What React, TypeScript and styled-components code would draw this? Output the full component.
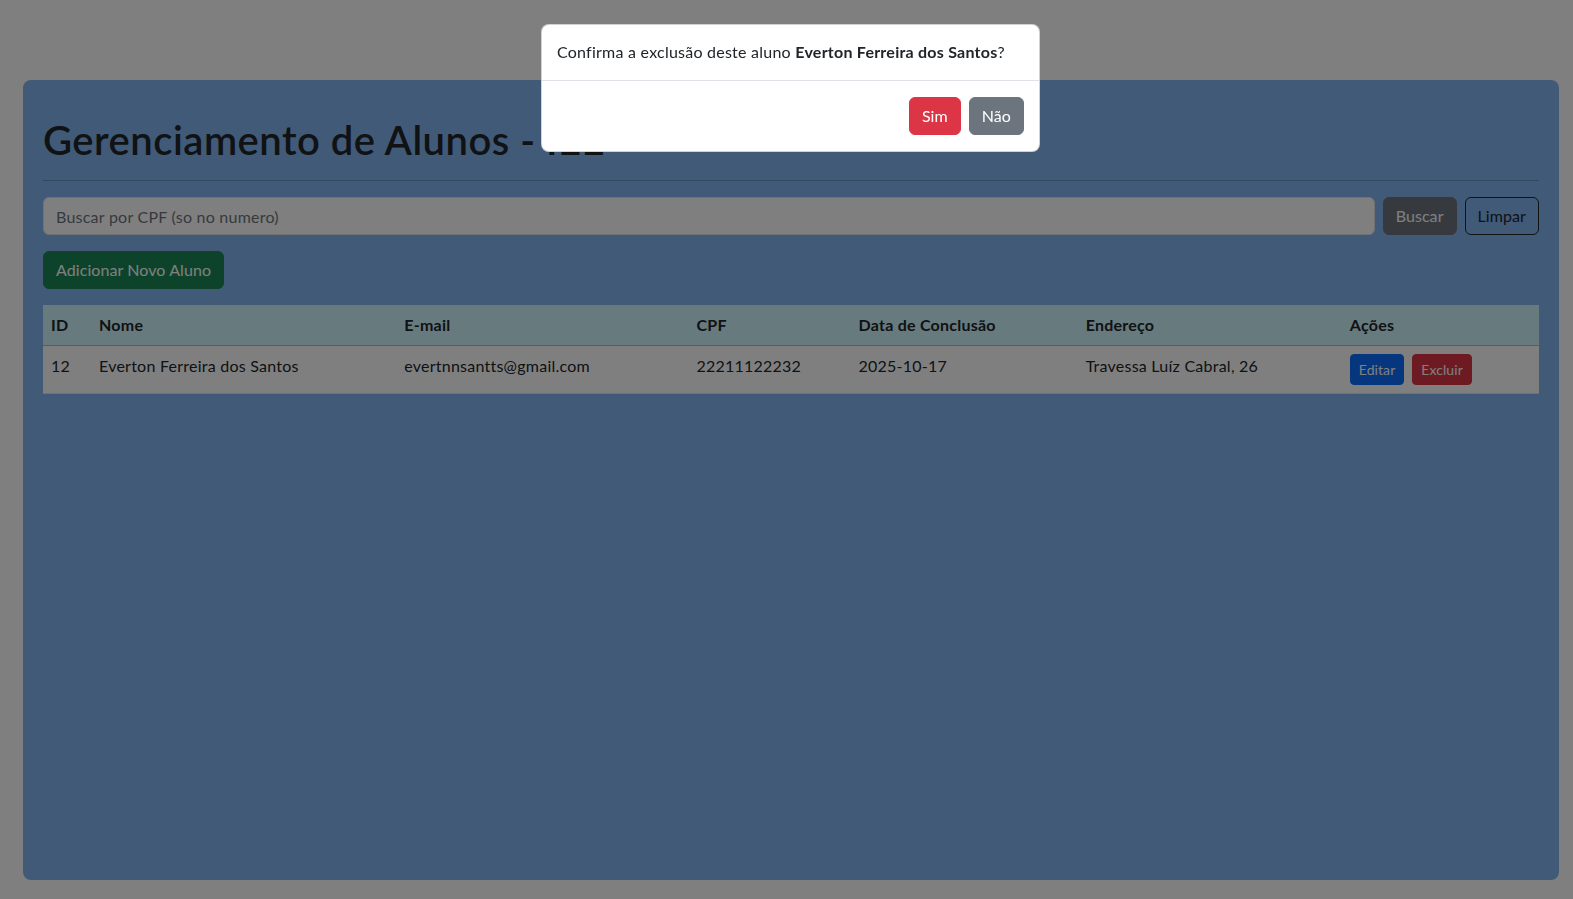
import React from "react";
import styled, { createGlobalStyle } from "styled-components";

const FONT = `Lato, "Noto Sans", sans-serif`;

const GlobalStyle = createGlobalStyle`
  html, body { margin: 0; padding: 0; height: 100%; }
  body {
    background: #ffffff;
    font-family: ${FONT};
    font-size: 16px;
    line-height: 1.5;
    letter-spacing: 0.015em;
    color: #212529;
    overflow: hidden;
  }
  * { box-sizing: border-box; }
`;

const Page = styled.div`
  padding: 80px 14px 19px 23px;
`;

const Card = styled.main`
  background: #80b4f0;
  border-radius: 8px;
  min-height: 800px;
  padding: 36px 20px 20px;
`;

const Title = styled.h1`
  margin: 0 0 8px;
  font-size: 40px;
  line-height: 48px;
  font-weight: 600;
  letter-spacing: 0.012em;
  color: #212529;
`;

const Rule = styled.hr`
  margin: 16px 0;
  border: 0;
  border-top: 1px solid rgba(33, 37, 41, 0.25);
`;

const SearchRow = styled.form`
  display: flex;
  gap: 8px;
  margin-bottom: 16px;
`;

const SearchInput = styled.input`
  flex: 1;
  height: 38px;
  padding: 6px 12px;
  font-family: ${FONT};
  font-size: 16px;
  letter-spacing: 0.015em;
  color: #212529;
  background: #ffffff;
  border: 1px solid #dee2e6;
  border-radius: 6px;
  &::placeholder { color: #6c757d; }
`;

type Variant = "secondary" | "outlineDark" | "success" | "primary" | "danger";

const palette: Record<Variant, { bg: string; fg: string; border: string }> = {
  secondary: { bg: "#6c757d", fg: "#ffffff", border: "#6c757d" },
  outlineDark: { bg: "transparent", fg: "#212529", border: "#212529" },
  success: { bg: "#198754", fg: "#ffffff", border: "#198754" },
  primary: { bg: "#0d6efd", fg: "#ffffff", border: "#0d6efd" },
  danger: { bg: "#dc3545", fg: "#ffffff", border: "#dc3545" },
};

const Button = styled.button<{ $variant: Variant; $small?: boolean }>`
  font-family: ${FONT};
  font-size: ${(p) => (p.$small ? "14px" : "16px")};
  line-height: ${(p) => (p.$small ? "21px" : "24px")};
  letter-spacing: 0.005em;
  padding: ${(p) => (p.$small ? "4px 8px" : "6px 12px")};
  border-radius: ${(p) => (p.$small ? "4px" : "6px")};
  background: ${(p) => palette[p.$variant].bg};
  color: ${(p) => palette[p.$variant].fg};
  border: 1px solid ${(p) => palette[p.$variant].border};
  cursor: pointer;
  white-space: nowrap;
`;

const AddRow = styled.div`
  margin-bottom: 16px;
`;

const Table = styled.table`
  width: 100%;
  border-collapse: collapse;
  table-layout: fixed;
  color: #212529;
`;

const HeadCell = styled.th<{ $w: number }>`
  width: ${(p) => p.$w}px;
  text-align: left;
  font-weight: 700;
  padding: 8px;
  background: #cff4fc;
  border-bottom: 1px solid #9fc2c8;
  line-height: 24px;
`;

const Cell = styled.td`
  padding: 8px;
  background: #ffffff;
  border-bottom: 1px solid #dee2e6;
  line-height: 24px;
  vertical-align: top;
`;

const Actions = styled.div`
  display: flex;
  gap: 8px;
`;

const Backdrop = styled.div`
  position: fixed;
  inset: 0;
  background: rgba(0, 0, 0, 0.5);
`;

const ModalLayer = styled.div`
  position: fixed;
  inset: 0;
`;

const Dialog = styled.div`
  margin: 24px 0 0 541px;
  width: 499px;
  background: #ffffff;
  border: 1px solid rgba(0, 0, 0, 0.175);
  border-radius: 8px;
  color: #212529;
`;

const ModalBody = styled.div`
  padding: 15px 15px 16px;
  line-height: 24px;
`;

const ModalFooter = styled.div`
  display: flex;
  justify-content: flex-end;
  gap: 8px;
  padding: 12px 15px;
  border-top: 1px solid #dee2e6;
  & > button { margin: 4px 0; }
`;

const columns = [
  { label: "ID", w: 48 },
  { label: "Nome", w: 305 },
  { label: "E-mail", w: 292 },
  { label: "CPF", w: 162 },
  { label: "Data de Conclusão", w: 227 },
  { label: "Endereço", w: 264 },
  { label: "Ações", w: 197 },
];

const row = {
  id: 12,
  nome: "Everton Ferreira dos Santos",
  email: "evertnnsantts@gmail.com",
  cpf: "22211122232",
  data: "2025-10-17",
  endereco: "Travessa Luíz Cabral, 26",
};

export default function App() {
  return (
    <>
      <GlobalStyle />
      <Page>
        <Card>
          <Title>Gerenciamento de Alunos - IEE</Title>
          <Rule />
          <SearchRow onSubmit={(e) => e.preventDefault()}>
            <SearchInput placeholder="Buscar por CPF (so no numero)" />
            <Button $variant="secondary" type="submit">Buscar</Button>
            <Button $variant="outlineDark" type="button">Limpar</Button>
          </SearchRow>
          <AddRow>
            <Button $variant="success">Adicionar Novo Aluno</Button>
          </AddRow>
          <Table>
            <thead>
              <tr>
                {columns.map((c) => (
                  <HeadCell key={c.label} $w={c.w}>{c.label}</HeadCell>
                ))}
              </tr>
            </thead>
            <tbody>
              <tr>
                <Cell>{row.id}</Cell>
                <Cell>{row.nome}</Cell>
                <Cell>{row.email}</Cell>
                <Cell>{row.cpf}</Cell>
                <Cell>{row.data}</Cell>
                <Cell>{row.endereco}</Cell>
                <Cell>
                  <Actions>
                    <Button $variant="primary" $small>Editar</Button>
                    <Button $variant="danger" $small>Excluir</Button>
                  </Actions>
                </Cell>
              </tr>
            </tbody>
          </Table>
        </Card>
      </Page>
      <Backdrop />
      <ModalLayer>
        <Dialog>
          <ModalBody>
            Confirma a exclusão deste aluno <strong>{row.nome}</strong>?
          </ModalBody>
          <ModalFooter>
            <Button $variant="danger">Sim</Button>
            <Button $variant="secondary">Não</Button>
          </ModalFooter>
        </Dialog>
      </ModalLayer>
    </>
  );
}
